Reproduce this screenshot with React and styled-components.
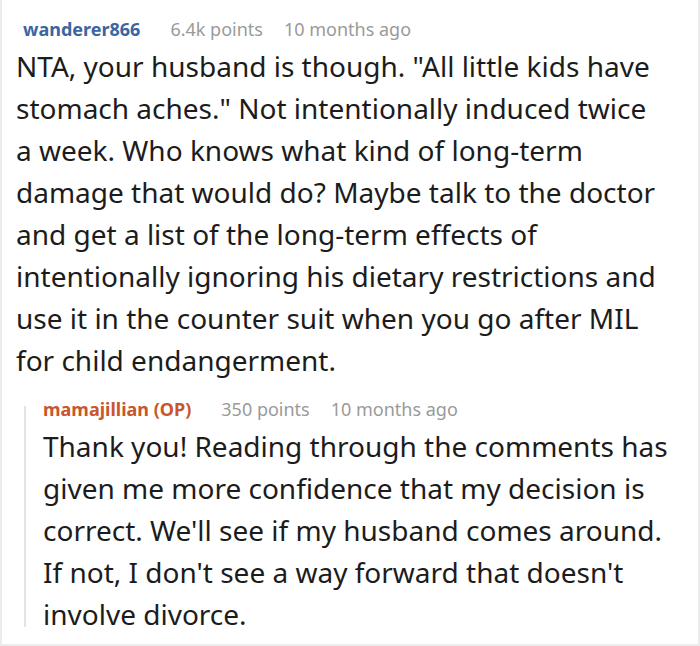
import React from 'react'
import styled, { createGlobalStyle } from 'styled-components'

const GlobalStyle = createGlobalStyle`
  body {
    margin: 0;
    background: #fff;
    font-family: "Noto Sans", "Open Sans", sans-serif;
  }
`

const Frame = styled.div`
  width: 700px;
  height: 646px;
  box-sizing: border-box;
  border: 2px solid #ececec;
  border-top: none;
  padding: 13px 0 0 14px;
  overflow: hidden;
`

const Comment = styled.div`
  display: flex;
  flex-direction: column;
`

const Meta = styled.div`
  display: flex;
  align-items: center;
  padding-left: ${p => p.$indent || 0}px;
  height: 32px;
  font-size: 18px;
  white-space: nowrap;
`

const Author = styled.span`
  font-weight: 700;
  color: ${p => (p.$op ? '#c9562c' : '#3d65a0')};
  margin-right: 30px;
`

const Info = styled.span`
  color: #9a9a9a;
  margin-right: 21px;
`

const Body = styled.p`
  margin: 0;
  font-size: 28px;
  line-height: 42px;
  color: #1c1c1c;
  width: ${p => p.$width}px;
`

const Reply = styled.div`
  display: flex;
  margin: 12px 0 0 8px;
`

const Rail = styled.div`
  flex: none;
  width: 2px;
  margin: 13px 17px 8px 0;
  background: #e4e4e4;
`

const ReplyContent = styled.div`
  display: flex;
  flex-direction: column;
`

export default function App() {
  return (
    <>
      <GlobalStyle />
      <Frame>
        <Comment>
          <Meta $indent={7}>
            <Author>wanderer866</Author>
            <Info>6.4k points</Info>
            <Info>10 months ago</Info>
          </Meta>
          <Body $width={646}>
            NTA, your husband is though. "All little kids have stomach aches." Not intentionally induced twice a week. Who knows what kind of long-term damage that would do? Maybe talk to the doctor and get a list of the long-term effects of intentionally ignoring his dietary restrictions and use it in the counter suit when you go after MIL for child endangerment.
          </Body>
          <Reply>
            <Rail />
            <ReplyContent>
              <Meta>
                <Author $op>mamajillian (OP)</Author>
                <Info>350 points</Info>
                <Info>10 months ago</Info>
              </Meta>
              <Body $width={630}>
                Thank you! Reading through the comments has given me more confidence that my decision is correct. We'll see if my husband comes around. If not, I don't see a way forward that doesn't involve divorce.
              </Body>
            </ReplyContent>
          </Reply>
        </Comment>
      </Frame>
    </>
  )
}
